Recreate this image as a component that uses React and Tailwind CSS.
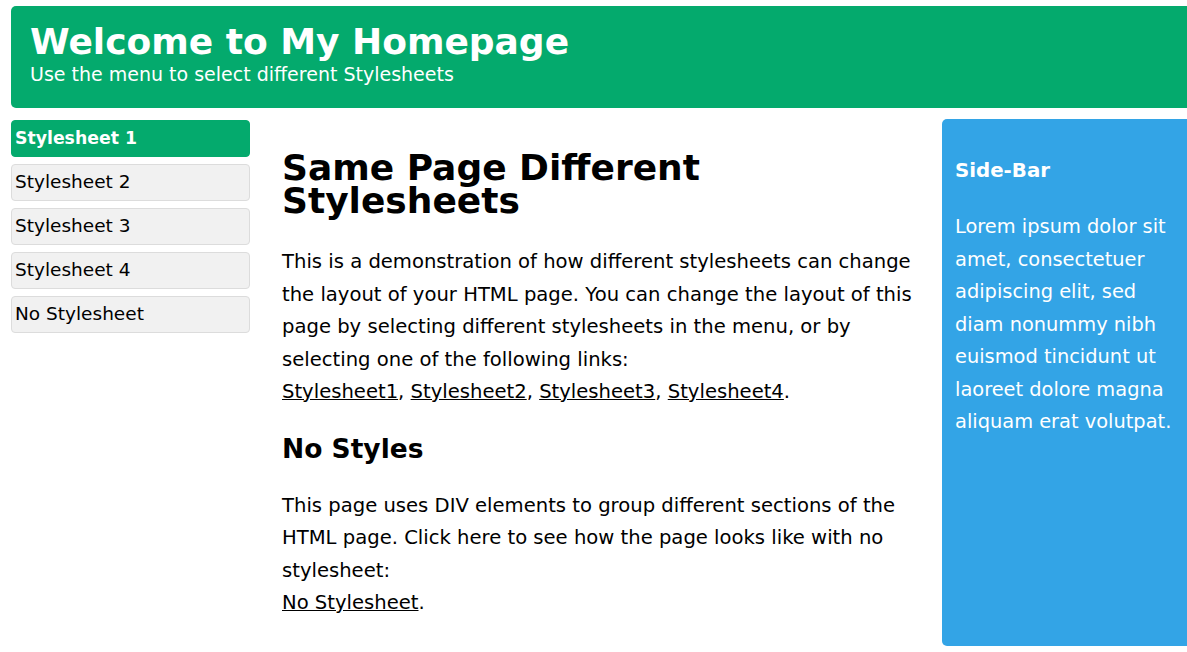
import React from 'react';

const menu = ['Stylesheet 1', 'Stylesheet 2', 'Stylesheet 3', 'Stylesheet 4', 'No Stylesheet'];

export default function App() {
  return (
    <div className="h-[652px] w-[1187px] overflow-hidden bg-white text-black" style={{ fontFamily: '"DejaVu Sans", sans-serif' }}>
      <div className="w-[1200px] pl-[11px] pt-[6px]">
        <header className="h-[102px] rounded-[5px] bg-[#04aa6d] pl-[19px] pt-[14px] text-white">
          <h1 className="text-[36px] font-bold leading-[44px]">Welcome to My Homepage</h1>
          <p className="text-[19px] leading-[20px]">Use the menu to select different Stylesheets</p>
        </header>

        <div className="mt-[11px] flex">
          <nav className="flex w-[239px] shrink-0 flex-col gap-[7px] pt-[1px]">
            {menu.map((item, i) => (
              <a
                key={item}
                className={`block h-[37px] rounded-[4px] border px-[3px] leading-[34px] ${
                  i === 0
                    ? 'border-[#04aa6d] bg-[#04aa6d] text-[17.3px] font-bold text-white'
                    : 'border-[#dcdcdc] bg-[#f1f1f1] text-[18.5px]'
                }`}
              >
                {item}
              </a>
            ))}
          </nav>

          <main className="w-[670px] shrink-0 pl-[32px] pt-[32px]">
            <h1 className="text-[36px] font-bold leading-[33px]">Same Page Different Stylesheets</h1>
            <p className="mt-[29px] text-[19.6px] leading-[32.5px]">
              This is a demonstration of how different stylesheets can change the layout of your HTML page. You can
              change the layout of this page by selecting different stylesheets in the menu, or by selecting one of the
              following links:
              <br />
              <a className="underline">Stylesheet1</a>, <a className="underline">Stylesheet2</a>,{' '}
              <a className="underline">Stylesheet3</a>, <a className="underline">Stylesheet4</a>.
            </p>
            <h2 className="mt-[22px] text-[26.5px] font-bold leading-[36px]">No Styles</h2>
            <p className="mt-[23px] text-[19.6px] leading-[32.5px]">
              This page uses DIV elements to group different sections of the HTML page. Click here to see how the page
              looks like with no stylesheet:
              <br />
              <a className="underline">No Stylesheet</a>.
            </p>
          </main>

          <aside className="ml-[22px] h-[527px] flex-1 rounded-[5px] bg-[#33a4e6] pl-[13px] pr-[10px] pt-[37px] text-white">
            <h3 className="text-[19.8px] font-bold leading-[30px]">Side-Bar</h3>
            <p className="mt-[25px] w-[222px] text-[19.4px] leading-[32.5px]">
              Lorem ipsum dolor sit amet, consectetuer adipiscing elit, sed diam nonummy nibh euismod tincidunt ut
              laoreet dolore magna aliquam erat volutpat.
            </p>
          </aside>
        </div>
      </div>
    </div>
  );
}
